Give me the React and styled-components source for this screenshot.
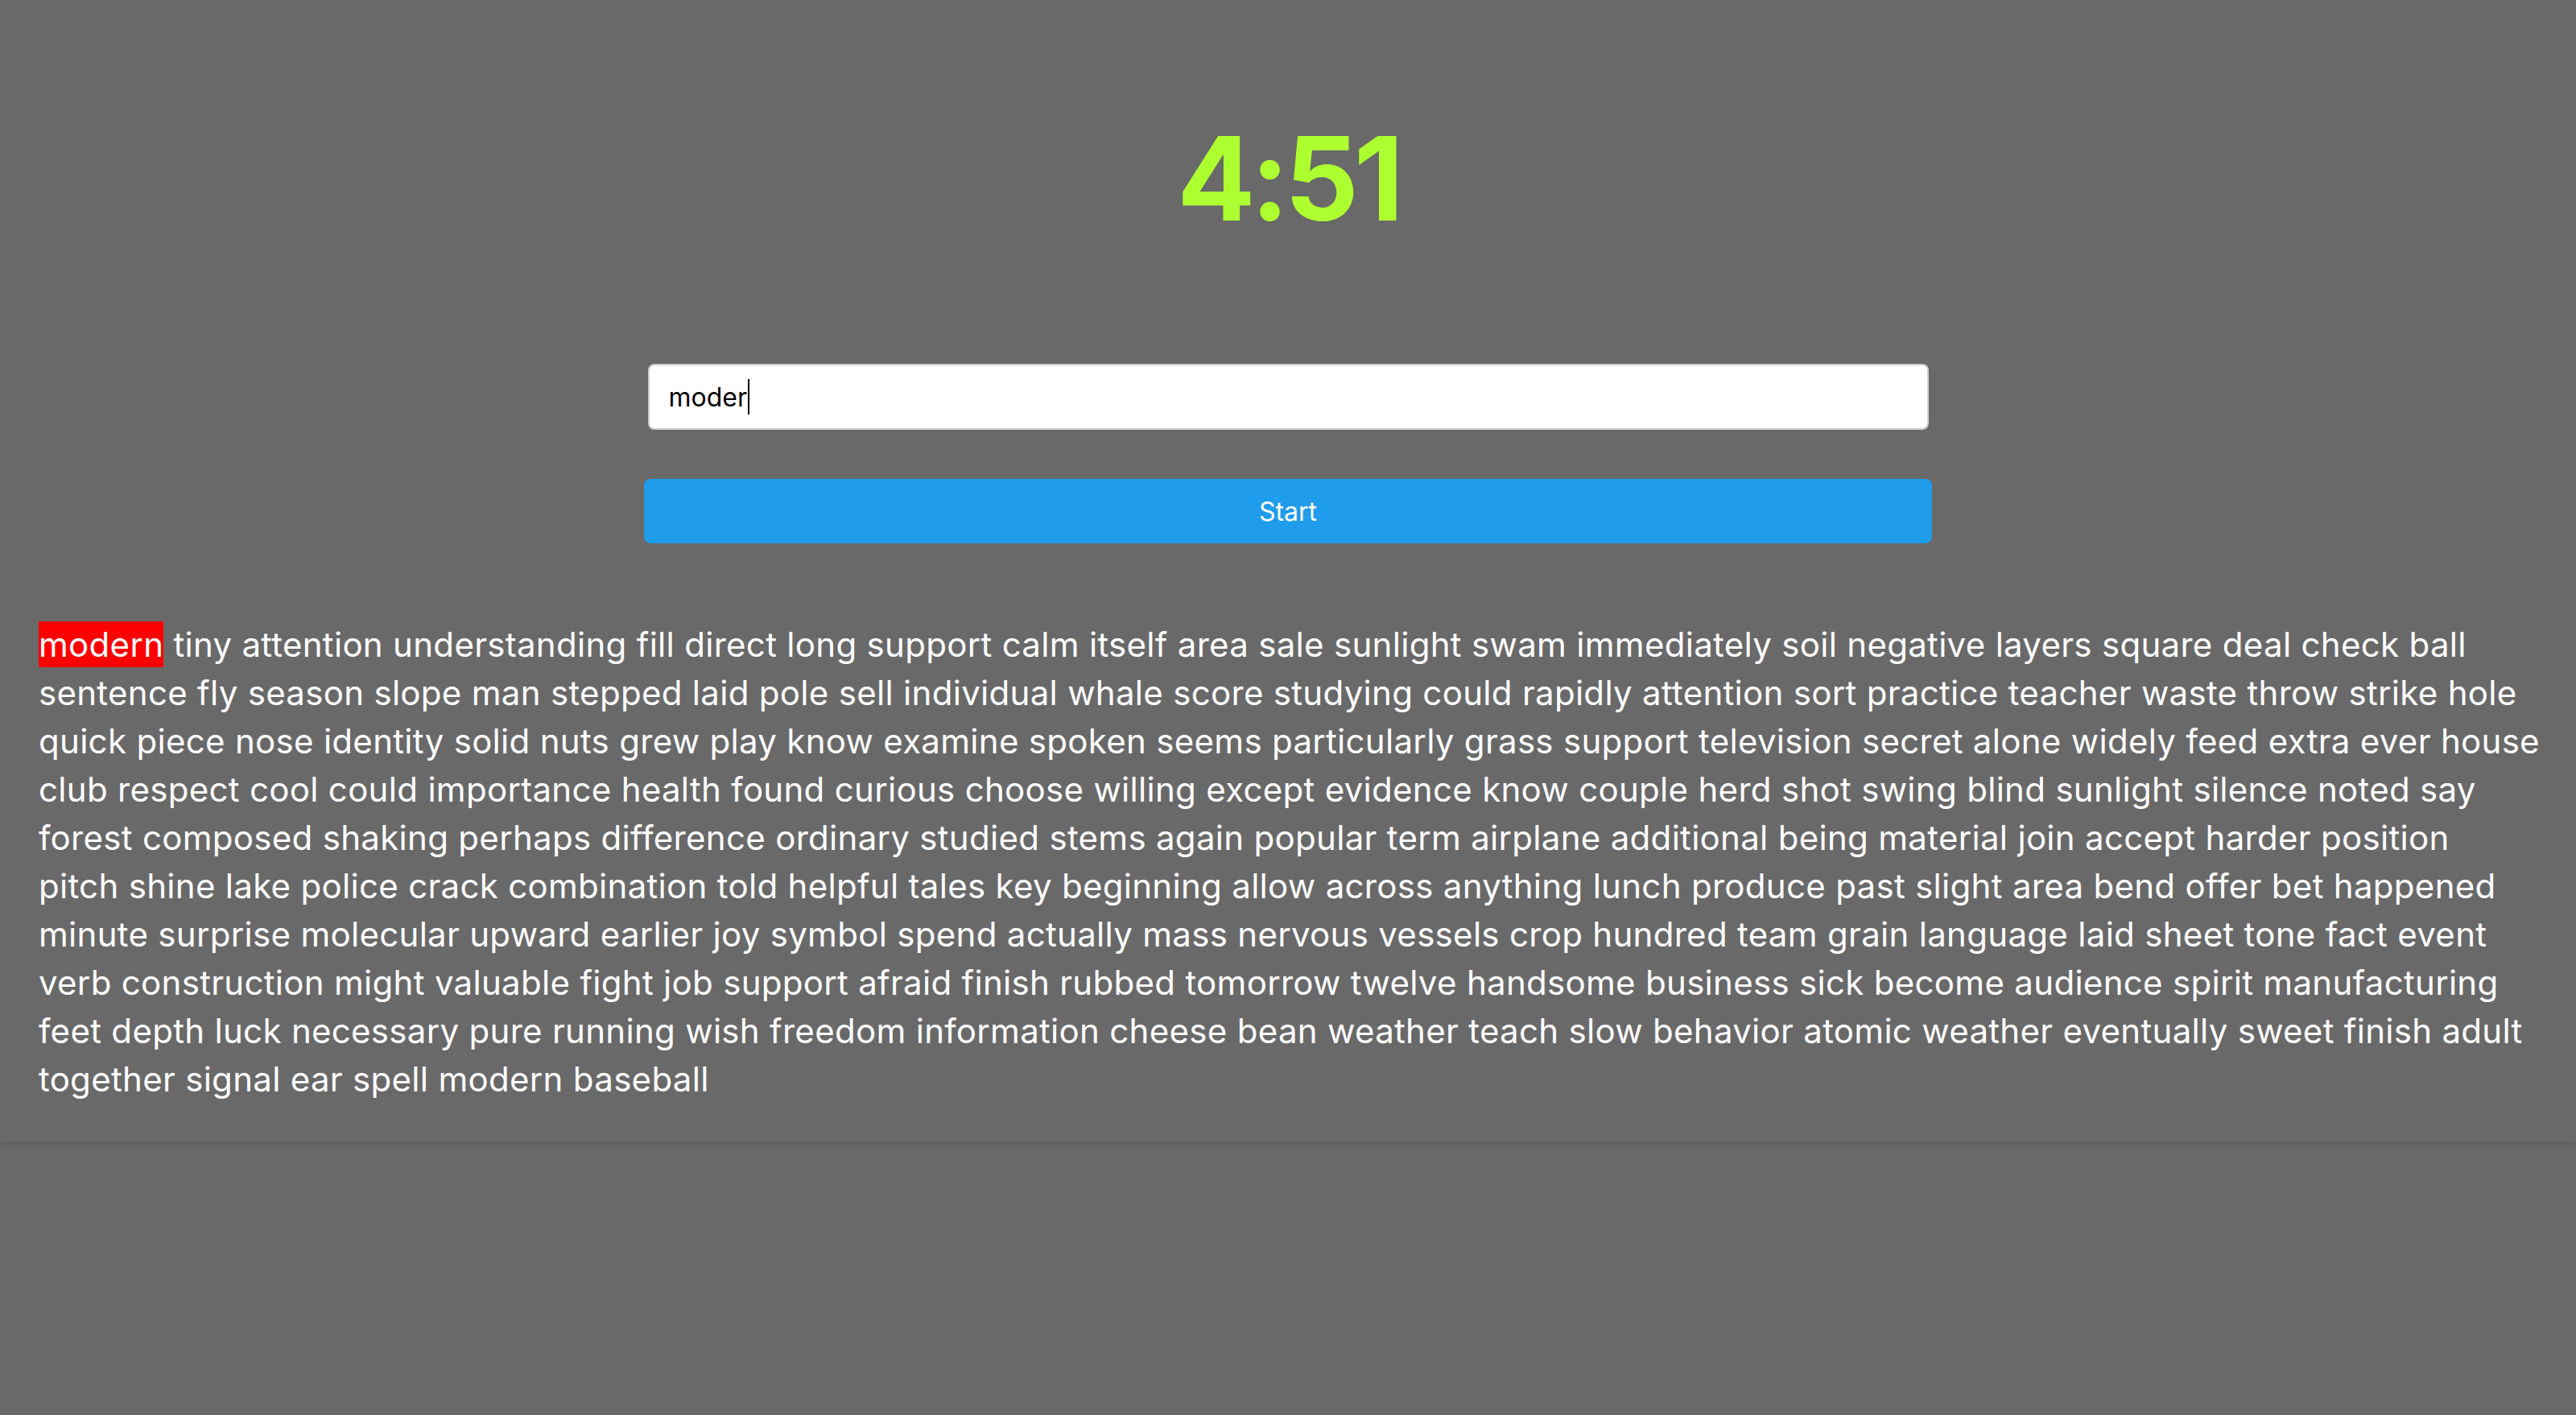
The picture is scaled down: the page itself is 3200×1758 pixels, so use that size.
import { useEffect, useRef } from 'react'
import styled, { createGlobalStyle } from 'styled-components'

const GlobalStyle = createGlobalStyle`
  html, body {
    margin: 0;
    padding: 0;
    background-color: #696969;
  }
  body {
    font-family: 'Inter', 'Noto Sans', sans-serif;
    color: #ffffff;
  }
`

const Page = styled.div`
  min-height: 100vh;
  background-color: #696969;
`

const Header = styled.section`
  display: flex;
  flex-direction: column;
  align-items: center;
  padding: 150px 48px 47px;
  box-shadow: 0 3px 8px rgba(0, 0, 0, 0.12);
`

const Timer = styled.h1`
  margin: 0 0 158px;
  font-size: 144px;
  line-height: 1;
  font-weight: 700;
  color: #adff2f;
  letter-spacing: -6px;
`

const InputWrap = styled.div`
  position: relative;
  width: 1591px;
  height: 82px;
  margin: 0 0 61px;
`

const TypingInput = styled.input`
  box-sizing: border-box;
  width: 100%;
  height: 100%;
  padding: 0 24px;
  border: 2px solid #cfcfcf;
  border-radius: 8px;
  background: #ffffff;
  font-family: 'Inter', 'Noto Sans', sans-serif;
  font-size: 32px;
  color: #000000;
  caret-color: transparent;
  outline: none;
`

const CaretLayer = styled.div`
  position: absolute;
  top: 0;
  left: 26px;
  height: 100%;
  display: flex;
  align-items: center;
  font-family: 'Inter', 'Noto Sans', sans-serif;
  font-size: 32px;
  color: transparent;
  pointer-events: none;
`

const Caret = styled.span`
  display: inline-block;
  width: 2px;
  height: 44px;
  margin-left: 1px;
  background: #000000;
`

const StartButton = styled.button`
  width: 1600px;
  height: 80px;
  margin: 0 0 96px;
  border: none;
  border-radius: 8px;
  background-color: #1f9ceb;
  color: #ffffff;
  font-family: 'Inter', 'Noto Sans', sans-serif;
  font-size: 32px;
  cursor: pointer;
`

const Words = styled.div`
  align-self: stretch;
  font-size: 42px;
  letter-spacing: 0.3px;
  line-height: 60px;
  color: #ffffff;
`

const Line = styled.div`
  white-space: nowrap;
`

const Word = styled.span`
  padding: 3px 0;
  background-color: ${(p) => (p.$current ? '#ff0000' : 'transparent')};
`

const lines = [
  'modern tiny attention understanding fill direct long support calm itself area sale sunlight swam immediately soil negative layers square deal check ball',
  'sentence fly season slope man stepped laid pole sell individual whale score studying could rapidly attention sort practice teacher waste throw strike hole',
  'quick piece nose identity solid nuts grew play know examine spoken seems particularly grass support television secret alone widely feed extra ever house',
  'club respect cool could importance health found curious choose willing except evidence know couple herd shot swing blind sunlight silence noted say',
  'forest composed shaking perhaps difference ordinary studied stems again popular term airplane additional being material join accept harder position',
  'pitch shine lake police crack combination told helpful tales key beginning allow across anything lunch produce past slight area bend offer bet happened',
  'minute surprise molecular upward earlier joy symbol spend actually mass nervous vessels crop hundred team grain language laid sheet tone fact event',
  'verb construction might valuable fight job support afraid finish rubbed tomorrow twelve handsome business sick become audience spirit manufacturing',
  'feet depth luck necessary pure running wish freedom information cheese bean weather teach slow behavior atomic weather eventually sweet finish adult',
  'together signal ear spell modern baseball',
]

export default function App() {
  const inputRef = useRef(null)
  const typed = 'moder'

  useEffect(() => {
    const el = inputRef.current
    if (el) {
      el.focus()
      el.setSelectionRange(el.value.length, el.value.length)
    }
  }, [])

  return (
    <Page>
      <GlobalStyle />
      <Header>
        <Timer>4:51</Timer>
        <InputWrap>
          <TypingInput ref={inputRef} defaultValue={typed} />
          <CaretLayer aria-hidden="true">
            {typed}
            <Caret />
          </CaretLayer>
        </InputWrap>
        <StartButton>Start</StartButton>
        <Words>
          {lines.map((line, i) => (
            <Line key={i}>
              {line.split(' ').map((w, j) => (
                <span key={j}>
                  {j > 0 && ' '}
                  <Word $current={i === 0 && j === 0}>{w}</Word>
                </span>
              ))}
            </Line>
          ))}
        </Words>
      </Header>
    </Page>
  )
}
